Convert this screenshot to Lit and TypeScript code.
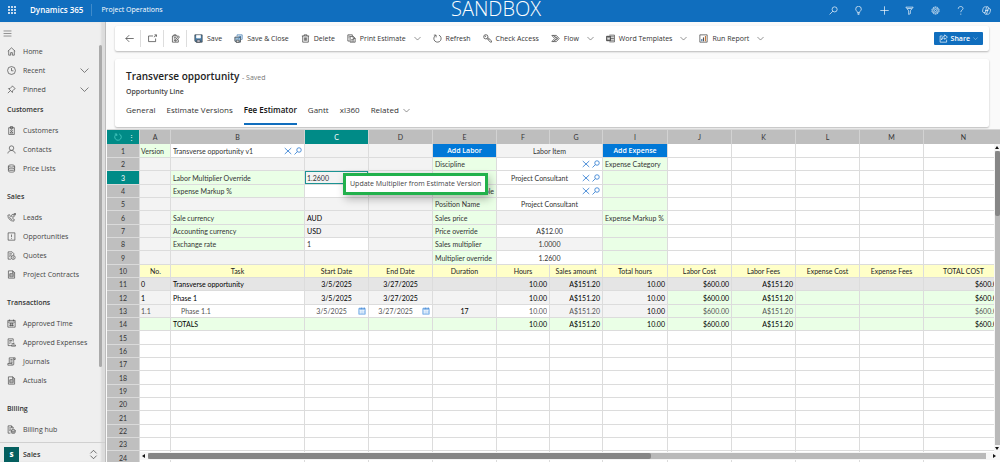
import { LitElement, html, svg, css, nothing } from "lit";
import { customElement, state } from "lit/decorators.js";
import { classMap } from "lit/directives/class-map.js";

const glyphs: Record<string, unknown> = {
  menu: svg`<path d="M1 3.5h14M1 8h14M1 12.5h14"/>`,
  home: svg`<path d="M1.500 7.500 8 1.500l6.500 6M3 6.500v8h3.500V10h3v4.500H13v-8"/>`,
  clock: svg`<circle cx="8" cy="8" r="7"/><path d="M8 3.500V8.500h3.500"/>`,
  pin: svg`<path d="M9.500 1.500l5 5-1.500.8-3 3-.4 3L2.700 6.400l3-.4 3-3zM6 10l-4.500 4.500"/>`,
  chevron: svg`<path d="M1 4.500l7 7 7-7"/>`,
  customers: svg`<path d="M3 3h10v12H3zM6 1h4v3.500H6z"/><circle cx="8" cy="8" r="1.500"/><path d="M5.500 12.500c0-3 5-3 5 0z"/>`,
  person: svg`<circle cx="8" cy="5.500" r="4"/><path d="M1.500 15c1-7 12-7 13 0"/>`,
  prices: svg`<ellipse cx="8" cy="3.500" rx="5.500" ry="2"/><path d="M2.500 3.500v9c0 2.700 11 2.700 11 0v-9M2.500 6.500c0 2.700 11 2.700 11 0M2.500 9.500c0 2.700 11 2.700 11 0"/>`,
  leads: svg`<path d="M1.500 4c0 6 4.500 10.500 10.500 10.500l1-3-3-1.500-1.500 1.500C6.500 10.500 5 9 4.500 7.500L6 6 4.500 3z"/><circle cx="10.500" cy="5" r="2.500"/><path d="M12 1h3v3M15 1l-3 3"/>`,
  opportunity: svg`<path d="M2 1.500h12v13H2zM8 4.500v4.500M8 10.500v1.500"/>`,
  quotes: svg`<path d="M7 14.500H2v-13h7l3 3v3M4 5h5M4 7.500h4M4 10h2"/><circle cx="11" cy="11.500" r="3.500"/><path d="M11 9.500v4"/>`,
  contract: svg`<path d="M2.500 1.500h8l3 3v10h-11zM10 1.500V5h3.500"/><path d="M5 6.500h6v5.500H5zM5 9h6"/>`,
  calendar: svg`<path d="M1.500 2.500h13v12h-13zM1.500 5.500h13M4.500 1v3M11.500 1v3M4 8.500h8M4 11.500h8M6.500 7v6M9.500 7v6"/>`,
  expenses: svg`<path d="M7 13.500H2v-12h9v5M4 4.500h5M4 7h4M4 9.500h2"/><path d="M8 10h5M8 12.500h7v2H8zM12 8v2"/>`,
  journal: svg`<path d="M4 1.500h10.500v3H12v8c0 2.500-2 2-3 2H1.500v-3H4zM6 4.500h4M6 7h4M6 9.500h4M12 4.500v-3M9 14v-2.500H4"/>`,
  billing: svg`<path d="M6 14.500H2v-13h6l3 3v2M4 5h3M4 7.500h3M4 10h2M8 1.500V5h3"/><ellipse cx="11" cy="9.500" rx="3.500" ry="1.500"/><path d="M7.500 9.500v4c0 1.800 7 1.800 7 0v-4M7.500 11.500c0 1.800 7 1.800 7 0"/>`,
  updown: svg`<path d="M2.500 6 8 .5 13.500 6M2.500 10 8 15.500 13.500 10"/>`,
  back: svg`<path d="M15.500 8H1.500M7.500 2 1.500 8l6 6"/>`,
  popout: svg`<path d="M9 3.500H1v10h12.500V8M10.500 5.500 15 2M11.500 1.500h3.500v3.500"/>`,
  editform: svg`<path d="M9 14.500H2.500v-11H12M5 6.500h4M5 9h3M5 11.500h2M5 3.500v-2h4v2M8 10.500l5-7 2 1.500-5 7-2.500 1zM13 10v4.500H9"/>`,
  save: svg`<path fill="#4d86b3" stroke="#333" d="M1.500 1.500h13v13h-11l-2-2z"/><path fill="#fff" stroke="#fff" d="M4.500 2.500h7V7h-7z"/><path fill="#dde" d="M5 10.500h6v4H5z"/>`,
  saveclose: svg`<path fill="#9cc0dc" stroke="#333" d="M1.500 5.500h10v9h-8l-2-2z"/><path fill="#fff" stroke="#333" d="M4 11h5v3.500H4z"/><path stroke="#2a6ca8" d="M5.500 4.500v-3h9v8h-2M8 4h4M12 4v3.500M12 4 8 8"/>`,
  trash: svg`<path d="M1.500 3.500h13M5.500 3.500v-2h5v2M3 3.500v11h10v-11M6 6v6M8 6v6M10 6v6"/>`,
  print: svg`<path d="M4.500 12.500h-3v-11h8v2M5.500 4.500h6l3 3v7h-9zM11 4.500V8h3.500M7.500 10h5M7.500 12.500h5M3 4h2M3 6.500h1"/>`,
  refresh: svg`<path d="M4.500 2.500a6.500 6.500 0 1 0 6 -.5M1.500 2h4v4"/>`,
  key: svg`<circle cx="5" cy="5" r="3.800"/><circle cx="4" cy="4" r=".6"/><path d="M7 8l6 6.500h2v-2.500L8.500 6.500M10 10l1-1.500"/>`,
  flow: svg`<path d="M1.500 2.500h8l5 5.500-5 5.500h-8L6.500 8zM4.500 2.500 9.500 8l-5 5.500M8 4.500 12 8l-4 3.500"/>`,
  word: svg`<path d="M6 2h9v12H6M8 5h6M8 8h6M8 11h6"/><path fill="#555" d="M1 4h7v8H1z"/><path stroke="#fff" d="M2.500 6l1 4 1-3.500 1 3.500 1-4"/>`,
  report: svg`<path d="M1.500 1.500h13v13h-13z"/><path stroke="#3a6ea5" stroke-width="2" d="M5 13V9"/><path stroke="#555" stroke-width="2" d="M8 13V6"/><path stroke="#c8793a" stroke-width="2" d="M11.500 13V3.500"/>`,
  share: svg`<path d="M6 3.500H2v11h11.500V10M10 1.500 15 5.500l-5 4V7c-3 0-4.500 1-5.500 3.500C4.500 6.500 6.500 4 10 4z"/>`,
  search: svg`<circle cx="10" cy="6" r="4.500"/><path d="M6.800 9.200 1 15"/>`,
  bulb: svg`<path d="M6 11.500C6 9 3 8.500 3 5.500a5 5 0 0 1 10 0C13 8.500 10 9 10 11.500zM6 13h4M6.500 15h3"/>`,
  plus: svg`<path d="M8 .5v15M.5 8h15"/>`,
  filter: svg`<path d="M1.500 2h13L9.500 8.500v5l-3 1.500V8.500zM4 4.500h8"/>`,
  gear: svg`<circle cx="8" cy="8" r="6.500" stroke-dasharray="3 1"/><circle cx="8" cy="8" r="4.800"/><circle cx="8" cy="8" r="2"/>`,
  help: svg`<path d="M4 5c0-5.500 8.500-5 8.500-.8C12.500 7 8.500 7.500 8.500 11M8.500 13.500v2"/>`,
  copilot: svg`<path d="M6 1.500h4.500c1 0 1.500 2 2 3.500H14c2 0 1 4 0 6.500-.6 2-1.500 3-3 3H6c-1.200 0-1.500-1.500-2-3H2.500c-2 0-1.500-4-.5-7 .7-2 1.500-3 4-3zM9.500 1.500c-2 0-2.500 6-3.500 10H4M7 14.500c2 0 2.500-6 3.500-9.500h2M5.500 8h6"/>`,
  close: svg`<path d="M1.500 2 14.500 14M14.500 2 1.500 14"/>`,
  date: svg`<path fill="#a9cdf3" stroke="#7fb2e8" d="M1.500 3h13v11.500h-13z"/><path stroke="#4a8ad4" d="M4 1v3.500M7 1v3.500M10 1v3.500M13 1v3.500"/><path stroke="#fff" stroke-width="1" d="M3 7h10M3 10h8M5 6v7M8 6v7M11 6v7"/>`,
};
const icon = (name: string, cls = "") =>
  html`<svg class="ic ${cls}" viewBox="0 0 16 16" aria-hidden="true">${glyphs[name]}</svg>`;

type Cell = { t?: unknown; c?: string; span?: number };
const GREEN = "green", GREY = "grey", DARK = "dark", NONE = "";

const field = (value: string, label: string) =>
  html`<input class="field" .value=${value} aria-label=${label} />`;
const lookup = (value: string, label: string) => html`<div class="lookup">
  ${field(value, label)}
  <button class="mini" aria-label="Clear ${label}">${icon("close")}</button>
  <button class="mini" aria-label="Find ${label}">${icon("search")}</button>
</div>`;
const dated = (value: string, label: string) => html`<div class="lookup">
  ${field(value, label)}<button class="mini" aria-label="Pick ${label}">${icon("date")}</button>
</div>`;
const plain = (n: number): Cell[] => Array.from({ length: n }, () => ({}));
const c = (t: unknown = "", cls = NONE, span = 1): Cell => ({ t, c: cls, span });
const money = (tone: string, look: string) => [
  c("$600.00", `${tone} num ${look}`), c("A$151.20", `${tone} num ${look}`),
  c("", tone), c("", tone), c("$600.00", `${tone} num ${look}`),
];

@customElement("fee-grid")
export class FeeGrid extends LitElement {
  @state() menuOpen = true;

  static styles = css`
    :host { display: block; position: relative; overflow: hidden; background: #fff; border-top: 1px solid #d6d6d6; font: 7px/12px Lato, sans-serif; color: #333; }
    .sheet { table-layout: fixed; width: 100%; min-width: 897px; border-collapse: separate; border-spacing: 0; }
    .w-head { width: 33px; } .w-no { width: 31px; } .w-task { width: 134px; } .w-std { width: 64px; } .w-half { width: 53px; } .w-total { width: 65px; }
    tr { height: 13px; }
    tbody tr:nth-child(3n), thead tr { height: 14px; }
    th, td { box-sizing: border-box; padding: 0 2px; border-right: 1px solid #dcdcdc; border-bottom: 1px solid #dcdcdc; white-space: nowrap; overflow: hidden; text-align: left; font-weight: 400; }
    thead th { background: #bebebe; text-align: center; border-bottom: 0; border-right-color: #d2d2d2; }
    tbody th { background: #bfbfbf; text-align: center; border-color: #dadada; }
    thead th.teal, tbody th.teal { background: #008b87; color: #fff; }
    .corner { display: flex; align-items: center; justify-content: flex-end; gap: 6px; padding-right: 2px; }
    .corner .ic { color: #4fd0c8; }
    td:nth-child(2) { padding-left: 1px; }
    .green { background: #eaffe6; } .grey { background: #f3f3f3; } .dark { background: #e5e5e5; }
    .yellow { background: #ffffc8; text-align: center; padding: 0; color: #222; }
    .num { text-align: right; } .mid { text-align: center; } .strong { color: #000; }
    .faded { color: #555; } td.indent { padding-left: 10px; }
    .picked { position: relative; overflow: visible; box-shadow: inset 0 0 0 1px #1c9393; }
    .blue { padding: 0; }
    .add { display: block; width: 100%; height: 13px; border: 0; padding: 0; background: #0078d7; color: #fff; font: 600 7px/12px "Open Sans", sans-serif; }
    .field { display: block; width: 100%; min-width: 0; height: 12px; box-sizing: border-box; border: 0; padding: 0; background: none; font: inherit; color: inherit; text-align: inherit; outline: 0; }
    .lookup { display: flex; align-items: center; gap: 1px; }
    .mini { flex: none; display: grid; place-items: center; width: 9px; height: 12px; border: 0; padding: 0; background: none; color: #2a78cf; }
    .ic { display: block; width: 8px; height: 8px; fill: none; stroke: currentColor; stroke-width: 1.6; }
    .menu { position: absolute; z-index: 2; left: 38px; top: 2px; height: 22px; box-sizing: border-box; border: 3px solid #22b14c; padding: 1px 4px 0; background: #fff; color: #444; font: 7px/14px "Open Sans", sans-serif; box-shadow: 2px 4px 8px #0004; }
    .hbar, .vbar { position: absolute; display: flex; align-items: center; background: #f6f6f6; }
    .hbar { left: 33px; right: 0; bottom: 2px; height: 8px; gap: 3px; padding: 0 4px 0 2px; }
    .vbar { top: 14px; right: 0; bottom: 10px; width: 6px; gap: 2px; padding: 2px 0; flex-direction: column; }
    .track { flex: 1; background: #b9b9b9; display: flex; }
    .hbar .track { height: 6px; margin-right: 4px; }
    .vbar .track { width: 5px; flex-direction: column; }
    .thumb { background: #868686; border-radius: 2px; }
    .hbar .thumb { width: 60%; } .vbar .thumb { height: 22%; }
    .tip { border: 2px solid transparent; }
    .l { border-right: 3px solid #111; border-left: 0; } .r { border-left: 3px solid #111; border-right: 0; }
    .u { border-bottom: 3px solid #111; border-top: 0; } .d { border-top: 3px solid #111; border-bottom: 0; }
  `;

  private rows(): Cell[][] {
    const tail = () => plain(5);
    return [
      [c("Version", GREEN), c(lookup("Transverse opportunity v1", "Version")), c("", GREY), c("", GREY), c(html`<button class="add">Add Labor</button>`, "blue"), c("Labor Item", "grey mid", 2), c(html`<button class="add">Add Expense</button>`, "blue"), ...tail()],
      [c("", GREY), c("", GREY), c("", GREY), c("", GREY), c("Discipline", GREEN), c(lookup("", "Discipline"), "mid", 2), c("Expense Category", GREEN), ...tail()],
      [c("", GREY), c("Labor Multiplier Override", GREEN), c(html`${field("1.2600", "Labor Multiplier Override")}${this.menuOpen ? html`<div class="menu" role="menu"><span role="menuitem">Update Multiplier from Estimate Version</span></div>` : nothing}`, "grey picked"), c("", GREY), c("", GREEN), c(lookup("Project Consultant", "Role"), "mid", 2), c("", GREEN), ...tail()],
      [c("", GREY), c("Expense Markup %", GREEN), c(field("", "Expense Markup %")), c("", GREY), c("Resource role", "green num"), c(lookup("", "Resource"), "mid", 2), c("", GREEN), ...tail()],
      [c("", GREY), c("", GREY), c("", GREY), c("", GREY), c("Position Name", GREEN), c(field("Project Consultant", "Position Name"), "mid", 2), c("", GREEN), ...tail()],
      [c("", GREY), c("Sale currency", GREEN), c("AUD", "grey strong"), c("", GREY), c("Sales price", GREEN), c("", GREY, 2), c("Expense Markup %", GREEN), ...tail()],
      [c("", GREY), c("Accounting currency", GREEN), c("USD", "grey strong"), c("", GREY), c("Price override", GREEN), c(field("A$12.00", "Price override"), "mid", 2), c("", GREEN), ...tail()],
      [c("", GREY), c("Exchange rate", GREEN), c(field("1", "Exchange rate")), c("", GREY), c("Sales multiplier", GREEN), c("1.0000", "grey mid", 2), c("", GREEN), ...tail()],
      [c("", GREY), c("", GREY), c("", GREY), c("", GREY), c("Multiplier override", GREEN), c(field("1.2600", "Multiplier override"), "mid", 2), c("", GREEN), ...tail()],
      ["No.", "Task", "Start Date", "End Date", "Duration", "Hours", "Sales amount", "Total hours", "Labor Cost", "Labor Fees", "Expense Cost", "Expense Fees", "TOTAL COST"].map((t) => c(t, "yellow")),
      [c("0", "dark strong"), c("Transverse opportunity", "dark strong"), c("3/5/2025", "dark mid strong"), c("3/27/2025", "dark mid strong"), c("", DARK), c("10.00", "dark num strong"), c("A$151.20", "dark num strong"), c("10.00", "dark num strong"), ...money(DARK, "strong")],
      [c("1", "grey strong"), c("Phase 1", "strong"), c("3/5/2025", "grey mid strong"), c("3/27/2025", "grey mid strong"), c("", GREY), c("10.00", "grey num strong"), c("A$151.20", "grey num strong"), c("10.00", "grey num strong"), ...money(GREEN, "strong")],
      [c("1.1", "grey faded"), c("Phase 1.1", "indent faded"), c(dated("3/5/2025", "Start Date"), "mid faded"), c(dated("3/27/2025", "End Date"), "mid faded"), c("17", "grey mid strong"), c(field("10.00", "Hours"), "num faded"), c("A$151.20", "grey num faded"), c("10.00", "grey num strong"), ...money(GREEN, "faded")],
      [c("", GREEN), c("TOTALS", "green strong"), c("", GREEN), c("", GREEN), c("", GREEN), c("10.00", "green num strong"), c("A$151.20", "green num strong"), c("10.00", "green num strong"), ...money(GREEN, "strong")],
      ...Array.from({ length: 10 }, () => plain(13)),
    ];
  }

  render() {
    const widths = ["head", "no", "task", "std", "std", "std", "half", "half", "total", "std", "std", "std", "std", "rest"];
    return html`
      <table class="sheet">
        <colgroup>${widths.map((w) => html`<col class="w-${w}" />`)}</colgroup>
        <thead><tr>
          <th class="teal"><div class="corner">${icon("refresh")}<span>⋮</span></div></th>
          ${"ABCDEFGIJKLMN".split("").map((l) => html`<th scope="col" class=${classMap({ teal: l === "C" })}>${l}</th>`)}
        </tr></thead>
        <tbody>
          ${this.rows().map((r, i) => html`<tr>
            <th scope="row" class=${classMap({ teal: i === 2 })}>${i + 1}</th>
            ${r.map((x) => html`<td class=${x.c ?? ""} colspan=${x.span ?? 1}>${x.t ?? ""}</td>`)}
          </tr>`)}
        </tbody>
      </table>
      <div class="vbar"><i class="tip u"></i><div class="track"><div class="thumb"></div></div><i class="tip d"></i></div>
      <div class="hbar"><i class="tip l"></i><div class="track"><div class="thumb"></div></div><i class="tip r"></i></div>
    `;
  }
}

@customElement("app-root")
export class AppRoot extends LitElement {
  static styles = css`
    :host { display: flex; flex-direction: column; height: 100vh; overflow: hidden; background: #fafafa; font: 7px/12px "Open Sans", sans-serif; color: #333; }
    button { border: 0; padding: 0; background: none; font: inherit; color: inherit; }
    a { color: inherit; text-decoration: none; }
    .ic { display: block; flex: none; width: 9px; height: 9px; fill: none; stroke: currentColor; stroke-width: 1.2; }
    .sm { width: 7px; height: 7px; }
    .top { flex: none; display: grid; grid-template-columns: 1fr auto 1fr; align-items: center; height: 22px; box-sizing: border-box; padding: 0 6px 2px 8px; background: #106ebe; color: #fff; }
    .brand { display: flex; align-items: center; }
    .waffle { display: grid; grid-template-columns: repeat(3, 2px); gap: 1px; margin-right: 14px; }
    .waffle i { width: 2px; height: 2px; background: #fff; border-radius: 1px; }
    .product { font-size: 8px; font-weight: 600; }
    .area { margin-left: 8px; padding-left: 9px; border-left: 1px solid #3f8bcb; }
    .env { font-size: 20px; line-height: 18px; font-weight: 300; margin: 0 10px 2px 0; }
    .tools { justify-self: end; display: flex; justify-content: space-between; width: 169px; }
    .tools button { width: 16px; display: grid; place-items: center; }
    .body { flex: 1; min-height: 0; display: flex; }
    .side { flex: none; width: 106px; box-sizing: border-box; display: flex; flex-direction: column; background: #efefef; border-right: 1px solid #bdbdbd; box-shadow: inset -4px 0 2px #dcdcdc; }
    .burger { padding: 7px 0 4px 3px; color: #666; }
    .scroll { flex: 1; min-height: 0; overflow: hidden; display: flex; justify-content: space-between; margin-right: 3px; }
    .nav { flex: 1; }
    .rail { width: 3px; height: 322px; margin-top: 3px; border-radius: 2px; background: #aaa; }
    .link { display: flex; align-items: center; gap: 7px; height: 19px; padding: 0 10px 0 7px; color: #444; white-space: nowrap; }
    .link span { flex: 1; }
    .nav h2 { margin: 8px 0 0; padding-left: 7px; font-size: 7px; line-height: 22px; font-weight: 600; }
    .nav h2:first-of-type { margin-top: 0; }
    .switch { flex: none; display: flex; align-items: center; gap: 4px; height: 20px; box-sizing: border-box; padding: 4px 7px 0 4px; border-top: 1px solid #d0d0d0; font-weight: 600; text-align: left; }
    .switch span { flex: 1; }
    .switch b { width: 15px; line-height: 15px; background: #045f5f; color: #fff; text-align: center; }
    .main { flex: 1; min-width: 0; display: flex; flex-direction: column; padding-left: 1px; }
    .card { background: #fff; border-radius: 2px; box-shadow: 0 1px 2px #0004; margin: 0 11px 0 8px; }
    .cmds { flex: none; display: flex; align-items: center; margin-top: 4px; height: 25px; padding: 0 6px 0 3px; }
    .only { width: 23px; height: 17px; display: grid; place-items: center; border-right: 1px solid #ddd; }
    .cmd { display: flex; align-items: center; gap: 4px; margin-left: 12px; white-space: nowrap; }
    .only + .cmd { margin-left: 7px; }
    .cmd .sm { margin-left: 4px; }
    .share { margin-left: auto; display: flex; align-items: center; gap: 3px; height: 13px; padding: 0 5px; border-radius: 1px; background: #106ebe; color: #fff; font-weight: 600; }
    .share .last { width: 5px; height: 5px; }
    .head { flex: none; margin-top: 8px; padding: 10px 11px 0; height: 68px; box-sizing: border-box; }
    h1 { margin: 0; font-size: 10px; line-height: 14px; font-weight: 600; color: #222; }
    h1 small { font-size: 7px; font-weight: 400; color: #777; }
    .sub { line-height: 13px; font-weight: 600; color: #444; }
    .tabs { display: flex; gap: 11px; margin-top: 7px; font-size: 8px; }
    .tab { display: flex; align-items: center; gap: 4px; height: 20px; padding-bottom: 8px; box-sizing: border-box; border-bottom: 2px solid transparent; }
    .on { font-weight: 600; color: #111; border-color: #106ebe; }
    fee-grid { flex: 1; min-height: 0; margin-top: 2px; }
  `;

  private groups: [string, [string, string, boolean?][]][] = [
    ["", [["home", "Home"], ["clock", "Recent", true], ["pin", "Pinned", true]]],
    ["Customers", [["customers", "Customers"], ["person", "Contacts"], ["prices", "Price Lists"]]],
    ["Sales", [["leads", "Leads"], ["opportunity", "Opportunities"], ["quotes", "Quotes"], ["contract", "Project Contracts"]]],
    ["Transactions", [["calendar", "Approved Time"], ["expenses", "Approved Expenses"], ["journal", "Journals"], ["contract", "Actuals"]]],
    ["Billing", [["billing", "Billing hub"], ["contract", ""]]],
  ];
  private commands: [string, string, boolean?][] = [
    ["save", "Save"], ["saveclose", "Save & Close"], ["trash", "Delete"], ["print", "Print Estimate", true], ["refresh", "Refresh"],
    ["key", "Check Access"], ["flow", "Flow", true], ["word", "Word Templates", true], ["report", "Run Report", true],
  ];

  render() {
    return html`
      <header class="top">
        <div class="brand">
          <button class="waffle" aria-label="App launcher">${Array.from({ length: 9 }, () => html`<i></i>`)}</button>
          <span class="product">Dynamics 365</span><span class="area">Project Operations</span>
        </div>
        <div class="env">SANDBOX</div>
        <div class="tools">
          ${["search", "bulb", "plus", "filter", "gear", "help", "copilot"].map((n) => html`<button aria-label=${n}>${icon(n)}</button>`)}
        </div>
      </header>
      <div class="body">
        <aside class="side">
          <button class="burger" aria-label="Toggle navigation">${icon("menu")}</button>
          <div class="scroll">
            <nav class="nav">
              ${this.groups.map(([title, links]) => html`
                ${title ? html`<h2>${title}</h2>` : nothing}
                ${links.map(([i, t, more]) => html`<a class="link" href="#">${icon(i)}<span>${t}</span>${more ? icon("chevron") : nothing}</a>`)}
              `)}
            </nav>
            <div class="rail"></div>
          </div>
          <button class="switch"><b>S</b><span>Sales</span>${icon("updown")}</button>
        </aside>
        <main class="main">
          <div class="card cmds">
            <button class="only" aria-label="Back">${icon("back")}</button>
            <button class="only" aria-label="Open in new window">${icon("popout")}</button>
            <button class="only" aria-label="Edit form">${icon("editform")}</button>
            ${this.commands.map(([i, t, more]) => html`<button class="cmd">${icon(i)}<span>${t}</span>${more ? icon("chevron", "sm") : nothing}</button>`)}
            <button class="share">${icon("share")}<span>Share</span>${icon("chevron", "last")}</button>
          </div>
          <div class="card head">
            <h1>Transverse opportunity <small>- Saved</small></h1>
            <div class="sub">Opportunity Line</div>
            <div class="tabs" role="tablist">
              ${["General", "Estimate Versions", "Fee Estimator", "Gantt", "xl360", "Related"].map((t, i) => html`
                <button role="tab" aria-selected=${i === 2} class=${classMap({ tab: true, on: i === 2 })}>${t}${t === "Related" ? icon("chevron", "sm") : nothing}</button>`)}
            </div>
          </div>
          <fee-grid></fee-grid>
        </main>
      </div>
    `;
  }
}
